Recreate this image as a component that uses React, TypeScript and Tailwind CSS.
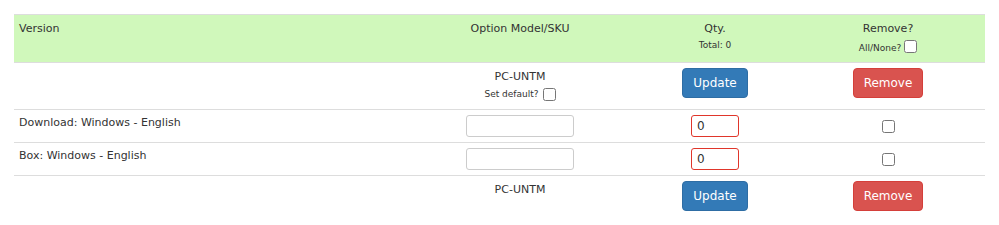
import React from "react";

const font = { fontFamily: '"DejaVu Sans", Verdana, sans-serif' };

function Btn({ kind, children }: { kind: "blue" | "red"; children: React.ReactNode }) {
  const cls =
    kind === "blue"
      ? "bg-[#337ab7] border-[#2e6da4]"
      : "bg-[#d9534f] border-[#d43f3a]";
  return (
    <button
      className={`${cls} border text-white rounded-[4px] h-[30px] px-[10px] text-[12px] leading-[28px]`}
    >
      {children}
    </button>
  );
}

function Cb() {
  return <input type="checkbox" className="w-[13px] h-[13px] m-0 block shrink-0" />;
}

export default function App() {
  return (
    <div className="px-[14px] pt-[14px] bg-white" style={font}>
      <table className="w-full border-collapse text-[11px] leading-[16px] text-[#333] table-fixed">
        <colgroup>
          <col className="w-[387px]" />
          <col className="w-[238px]" />
          <col className="w-[152px]" />
          <col className="w-[194px]" />
        </colgroup>
        <thead>
          <tr className="bg-[#d0f8bb] border-t border-b border-[#ddd] align-top h-[48px]">
            <th className="text-left font-normal px-[5px] pt-[6px] pb-[8px]">Version</th>
            <th className="text-center font-normal px-[5px] pt-[6px] pb-[8px]">Option Model/SKU</th>
            <th className="text-center font-normal px-[5px] pt-[6px] pb-[8px]">
              <div>Qty.</div>
              <div className="text-[9px] leading-[14px] mt-[1px]">Total: 0</div>
            </th>
            <th className="text-center font-normal px-[5px] pt-[6px] pb-[8px]">
              <div>Remove?</div>
              <div className="text-[9px] mt-[3px] flex items-end justify-center gap-[3px]">
                <span className="leading-[10px]">All/None?</span>
                <Cb />
              </div>
            </th>
          </tr>
        </thead>
        <tbody>
          <tr className="border-b border-[#ddd] align-top h-[46px]">
            <td className="p-[5px]"></td>
            <td className="px-[5px] pt-[5px] pb-[8px] text-center">
              <div className="mt-[1px]">PC-UNTM</div>
              <div className="text-[9px] leading-[14px] mt-[2px] flex items-center justify-center gap-[4px]">
                <span>Set default?</span>
                <Cb />
              </div>
            </td>
            <td className="p-[5px] text-center">
              <Btn kind="blue">Update</Btn>
            </td>
            <td className="p-[5px] text-center">
              <Btn kind="red">Remove</Btn>
            </td>
          </tr>
          {["Download: Windows - English", "Box: Windows - English"].map((v) => (
            <tr key={v} className="border-b border-[#ddd] align-top">
              <td className="p-[5px]">{v}</td>
              <td className="p-[5px] text-center">
                <input
                  type="text"
                  className="w-[108px] h-[22px] border border-[#ccc] rounded-[3px] align-top"
                />
              </td>
              <td className="p-[5px] text-center">
                <input
                  type="text"
                  defaultValue="0"
                  className="w-[48px] h-[22px] border border-[#e0362b] rounded-[3px] px-[5px] text-[12px] text-[#333] align-top"
                />
              </td>
              <td className="p-[5px] text-center">
                <div className="h-[22px] flex items-center justify-center">
                  <Cb />
                </div>
              </td>
            </tr>
          ))}
          <tr className="align-top">
            <td className="p-[5px]"></td>
            <td className="p-[5px] text-center">
              <div className="mt-[1px]">PC-UNTM</div>
            </td>
            <td className="p-[5px] text-center">
              <Btn kind="blue">Update</Btn>
            </td>
            <td className="p-[5px] text-center">
              <Btn kind="red">Remove</Btn>
            </td>
          </tr>
        </tbody>
      </table>
    </div>
  );
}
